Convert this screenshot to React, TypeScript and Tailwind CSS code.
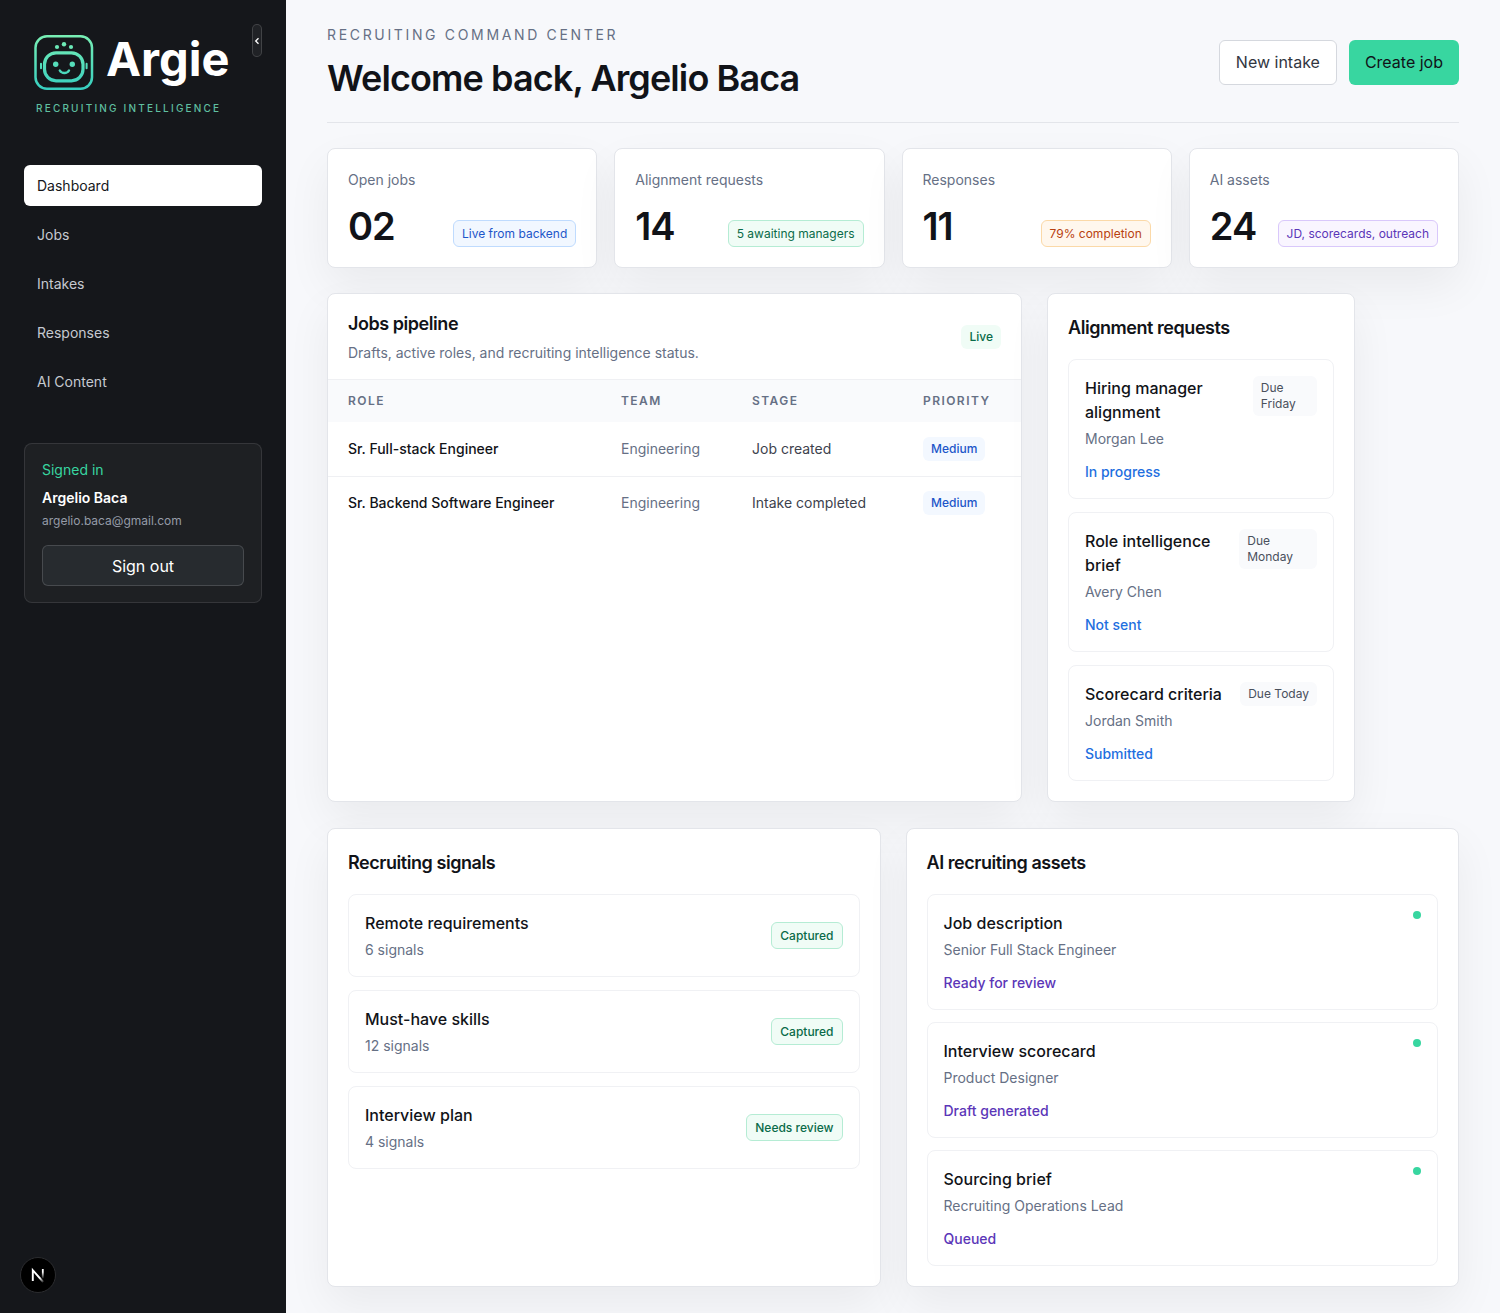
import { useState } from "react";

const navItems = ["Dashboard", "Jobs", "Intakes", "Responses", "AI Content"];

const stats = [
  { label: "Open jobs", value: "02", note: "Live from backend", tone: "border-[#bfdbfe] bg-[#f1f7ff] text-[#1d56c9]" },
  { label: "Alignment requests", value: "14", note: "5 awaiting managers", tone: "border-[#b5ecd4] bg-[#f0fcf6] text-[#0a6b49]" },
  { label: "Responses", value: "11", note: "79% completion", tone: "border-[#fbd9a8] bg-[#fff7ed] text-[#b8410f]" },
  { label: "AI assets", value: "24", note: "JD, scorecards, outreach", tone: "border-[#d9c8fb] bg-[#f9f5ff] text-[#5b36b8]" },
];

const jobs = [
  { role: "Sr. Full-stack Engineer", team: "Engineering", stage: "Job created", priority: "Medium" },
  { role: "Sr. Backend Software Engineer", team: "Engineering", stage: "Intake completed", priority: "Medium" },
];

const requests = [
  { title: "Hiring manager alignment", owner: "Morgan Lee", status: "In progress", due: "Due Friday" },
  { title: "Role intelligence brief", owner: "Avery Chen", status: "Not sent", due: "Due Monday" },
  { title: "Scorecard criteria", owner: "Jordan Smith", status: "Submitted", due: "Due Today" },
];

const signals = [
  { title: "Remote requirements", count: "6 signals", status: "Captured" },
  { title: "Must-have skills", count: "12 signals", status: "Captured" },
  { title: "Interview plan", count: "4 signals", status: "Needs review" },
];

const assets = [
  { title: "Job description", role: "Senior Full Stack Engineer", status: "Ready for review" },
  { title: "Interview scorecard", role: "Product Designer", status: "Draft generated" },
  { title: "Sourcing brief", role: "Recruiting Operations Lead", status: "Queued" },
];

const panel = "rounded-lg border border-[#e3e5ea] bg-white shadow-[0_18px_45px_rgba(17,19,24,0.06)]";
const itemCard = "rounded-lg border border-[#f0f1f4] p-4";

function RobotMark() {
  return (
    <svg width="60" height="57" viewBox="0 0 60 57" fill="none" aria-hidden="true">
      <defs>
        <linearGradient id="mint" x1="0" y1="0" x2="0" y2="57" gradientUnits="userSpaceOnUse">
          <stop stopColor="#7af0b4" />
          <stop offset="1" stopColor="#35cdc0" />
        </linearGradient>
      </defs>
      <g stroke="url(#mint)">
        <rect x="1.500" y="2.300" width="56.500" height="52.500" rx="11.500" strokeWidth="2.500" />
        <rect x="10.500" y="18.800" width="38.500" height="28" rx="11.500" strokeWidth="3.200" />
        <path d="M25.800 36.500c2 3.400 7.200 3.400 9.200 0" strokeWidth="2.400" strokeLinecap="round" />
        <path d="M7 29.800v4.400M52.600 29.800v4.400" strokeWidth="2" strokeLinecap="round" />
      </g>
      <g fill="url(#mint)">
        <circle cx="21.700" cy="30.300" r="2.700" />
        <circle cx="38.300" cy="30.300" r="2.700" />
        <circle cx="23" cy="13" r="2.100" />
        <circle cx="30" cy="10.200" r="2.200" />
        <circle cx="37" cy="13" r="2.100" />
      </g>
    </svg>
  );
}

function Sidebar() {
  const [active, setActive] = useState("Dashboard");

  return (
    <aside className="flex w-[286px] shrink-0 flex-col bg-[#15171b] px-6 pt-6 text-white">
      <div className="flex h-[141px] items-start justify-between">
        <div className="pt-[10px] pl-[10px]">
          <div className="flex items-start gap-3">
            <RobotMark />
            <span className="text-[47px] leading-[50px] font-bold">Argie</span>
          </div>
          <p className="mt-[9px] pl-[2px] text-[10px] leading-4 font-medium tracking-[0.22em] text-[#5fbfa0]">
            RECRUITING INTELLIGENCE
          </p>
        </div>
        <button
          type="button"
          aria-label="Collapse sidebar"
          className="flex h-[33px] w-[10px] items-center justify-center rounded-md border border-white/15 bg-white/5"
        >
          <svg width="6" height="8" viewBox="0 0 6 8" fill="none" className="shrink-0" aria-hidden="true">
            <path d="M4.500 1.200L1.700 4l2.800 2.800" stroke="#fff" strokeWidth="1.300" />
          </svg>
        </button>
      </div>

      <nav className="flex flex-col gap-2">
        {navItems.map((item) => (
          <a
            key={item}
            href="#"
            onClick={() => setActive(item)}
            className={
              item === active
                ? "rounded-md bg-white px-[13px] py-[10px] text-sm leading-[21px] text-[#15171b]"
                : "rounded-md px-[13px] py-[10px] text-sm leading-[21px] text-[#c5c9d0]"
            }
          >
            {item}
          </a>
        ))}
      </nav>

      <section className="mt-[41px] rounded-lg border border-white/10 bg-white/[0.04] px-[17px] py-4">
        <p className="text-sm leading-5 text-[#38d6a0]">Signed in</p>
        <p className="mt-2 text-sm leading-5 font-semibold">Argelio Baca</p>
        <p className="mt-[5px] text-xs leading-4 text-[#959ba7]">argelio.baca@gmail.com</p>
        <button
          type="button"
          className="mt-4 h-[41px] w-full rounded-md border border-white/15 bg-[#272b2f] text-base"
        >
          Sign out
        </button>
      </section>
    </aside>
  );
}

function PageHeader() {
  return (
    <header className="flex items-center justify-between border-b border-[#e3e5ea] pb-[22px]">
      <div>
        <p className="text-sm leading-[22px] tracking-[0.19em] text-[#667085]">RECRUITING COMMAND CENTER</p>
        <h1 className="mt-[10px] text-[36px] leading-[44px] font-semibold tracking-tight text-[#111318]">
          Welcome back, Argelio Baca
        </h1>
      </div>
      <div className="flex gap-3">
        <button
          type="button"
          className="h-[45px] rounded-md border border-[#d5d8de] bg-white px-4 text-base text-[#32363f]"
        >
          New intake
        </button>
        <button type="button" className="h-[45px] rounded-md bg-[#38d6a0] px-4 text-base text-[#111318]">
          Create job
        </button>
      </div>
    </header>
  );
}

function StatCards() {
  return (
    <section className="mt-[25px] grid grid-cols-4 gap-[17px]">
      {stats.map((stat) => (
        <article key={stat.label} className={`${panel} p-5`}>
          <p className="text-sm leading-[21px] text-[#667085]">{stat.label}</p>
          <div className="mt-4 flex items-end justify-between">
            <strong className="text-[38px] leading-[41px] font-semibold tracking-tight text-[#111318]">{stat.value}</strong>
            <span className={`rounded-md border px-2 text-xs leading-[25px] ${stat.tone}`}>{stat.note}</span>
          </div>
        </article>
      ))}
    </section>
  );
}

function JobsPipeline() {
  return (
    <section className={`${panel} overflow-hidden`}>
      <div className="flex items-center justify-between px-5 py-4">
        <div>
          <h2 className="text-lg leading-7 font-semibold tracking-tight">Jobs pipeline</h2>
          <p className="mt-1 text-sm leading-[21px] text-[#667085]">
            Drafts, active roles, and recruiting intelligence status.
          </p>
        </div>
        <span className="rounded-md bg-[#f0fcf6] px-2 text-xs leading-6 font-medium text-[#0a6b49]">Live</span>
      </div>
      <table className="w-full text-left text-sm">
        <thead className="border-t border-[#eff0f3] bg-[#f9fafc] text-xs leading-[18px] tracking-[0.12em] text-[#667085]">
          <tr>
            <th className="w-[273px] px-5 py-3 font-semibold">ROLE</th>
            <th className="w-[131px] px-5 py-3 font-semibold">TEAM</th>
            <th className="w-[171px] px-5 py-3 font-semibold">STAGE</th>
            <th className="w-[118px] px-5 py-3 font-semibold">PRIORITY</th>
          </tr>
        </thead>
        <tbody className="divide-y divide-[#eff0f3]">
          {jobs.map((job) => (
            <tr key={job.role} className="h-[54px]">
              <td className="px-5 font-medium whitespace-nowrap text-[#111318]">{job.role}</td>
              <td className="px-5 text-[#667085]">{job.team}</td>
              <td className="px-5 whitespace-nowrap text-[#3d424d]">{job.stage}</td>
              <td className="px-5">
                <span className="inline-block rounded-md bg-[#f3f8ff] px-2 text-xs leading-6 font-medium text-[#1d56c9]">
                  {job.priority}
                </span>
              </td>
            </tr>
          ))}
        </tbody>
      </table>
    </section>
  );
}

function AlignmentRequests() {
  return (
    <section className={`${panel} p-5`}>
      <h2 className="text-lg leading-7 font-semibold tracking-tight">Alignment requests</h2>
      <div className="mt-[17px] flex flex-col gap-[13px]">
        {requests.map((request) => (
          <article key={request.title} className={itemCard}>
            <div className="flex items-start justify-between gap-3">
              <div>
                <h3 className="text-base leading-6 font-medium">{request.title}</h3>
                <p className="mt-1 text-sm leading-[21px] text-[#667085]">{request.owner}</p>
              </div>
              <span className="rounded-md bg-[#f9fafc] px-2 py-1 text-xs text-[#4a505c]">{request.due}</span>
            </div>
            <p className="mt-3 text-sm leading-[21px] font-medium text-[#1f6fe0]">{request.status}</p>
          </article>
        ))}
      </div>
    </section>
  );
}

function RecruitingSignals() {
  return (
    <section className={`${panel} p-5`}>
      <h2 className="text-lg leading-7 font-semibold tracking-tight">Recruiting signals</h2>
      <div className="mt-[17px] flex flex-col gap-[13px]">
        {signals.map((signal) => (
          <article key={signal.title} className={`${itemCard} flex items-center justify-between`}>
            <div>
              <h3 className="text-base leading-6 font-medium">{signal.title}</h3>
              <p className="mt-1 text-sm leading-[21px] text-[#667085]">{signal.count}</p>
            </div>
            <span className="rounded-md border border-[#b5ecd4] bg-[#f0fcf6] px-2 text-xs leading-[25px] font-medium text-[#0a6b49]">
              {signal.status}
            </span>
          </article>
        ))}
      </div>
    </section>
  );
}

function RecruitingAssets() {
  return (
    <section className={`${panel} p-5`}>
      <h2 className="text-lg leading-7 font-semibold tracking-tight">AI recruiting assets</h2>
      <div className="mt-[17px] flex flex-col gap-3">
        {assets.map((asset) => (
          <article key={asset.title} className={itemCard}>
            <div className="flex items-start justify-between">
              <div>
                <h3 className="text-base leading-6 font-medium">{asset.title}</h3>
                <p className="mt-1 text-sm leading-[21px] text-[#667085]">{asset.role}</p>
              </div>
              <span className="size-2 rounded-full bg-[#38d6a0]" />
            </div>
            <p className="mt-3 text-sm leading-[21px] font-medium text-[#5b36b8]">{asset.status}</p>
          </article>
        ))}
      </div>
    </section>
  );
}

function DevBadge() {
  return (
    <button
      type="button"
      aria-label="Open dev tools"
      className="fixed bottom-5 left-5 flex size-9 items-center justify-center rounded-full border border-[#2c2d30] bg-black"
    >
      <svg width="14" height="16" viewBox="0 0 14 16" fill="none" aria-hidden="true">
        <defs>
          <linearGradient id="fade" x1="0" y1="2" x2="0" y2="12" gradientUnits="userSpaceOnUse">
            <stop offset="0.300" stopColor="#fff" />
            <stop offset="1" stopColor="#fff" stopOpacity="0" />
          </linearGradient>
          <linearGradient id="slant" x1="2" y1="2" x2="13" y2="15" gradientUnits="userSpaceOnUse">
            <stop offset="0.650" stopColor="#fff" />
            <stop offset="1" stopColor="#fff" stopOpacity="0.100" />
          </linearGradient>
        </defs>
        <path d="M1.800 14V3.200l10.400 11.800" stroke="url(#slant)" strokeWidth="1.900" />
        <path d="M11.800 2v9.500" stroke="url(#fade)" strokeWidth="1.800" />
      </svg>
    </button>
  );
}

export default function App() {
  return (
    <div className="flex min-h-screen bg-[#f7f8fb] font-['Inter',sans-serif] text-[#111318]">
      <Sidebar />
      <main className="min-w-0 flex-1 px-[41px] pt-6 pb-6">
        <PageHeader />
        <StatCards />

        {/* Pipeline and requests */}
        <div className="mt-[25px] grid grid-cols-[695fr_308fr_79fr] gap-[25px]">
          <JobsPipeline />
          <AlignmentRequests />
        </div>

        {/* Signals and assets */}
        <div className="mt-[26px] grid grid-cols-2 gap-[25px]">
          <RecruitingSignals />
          <RecruitingAssets />
        </div>
      </main>
      <DevBadge />
    </div>
  );
}
